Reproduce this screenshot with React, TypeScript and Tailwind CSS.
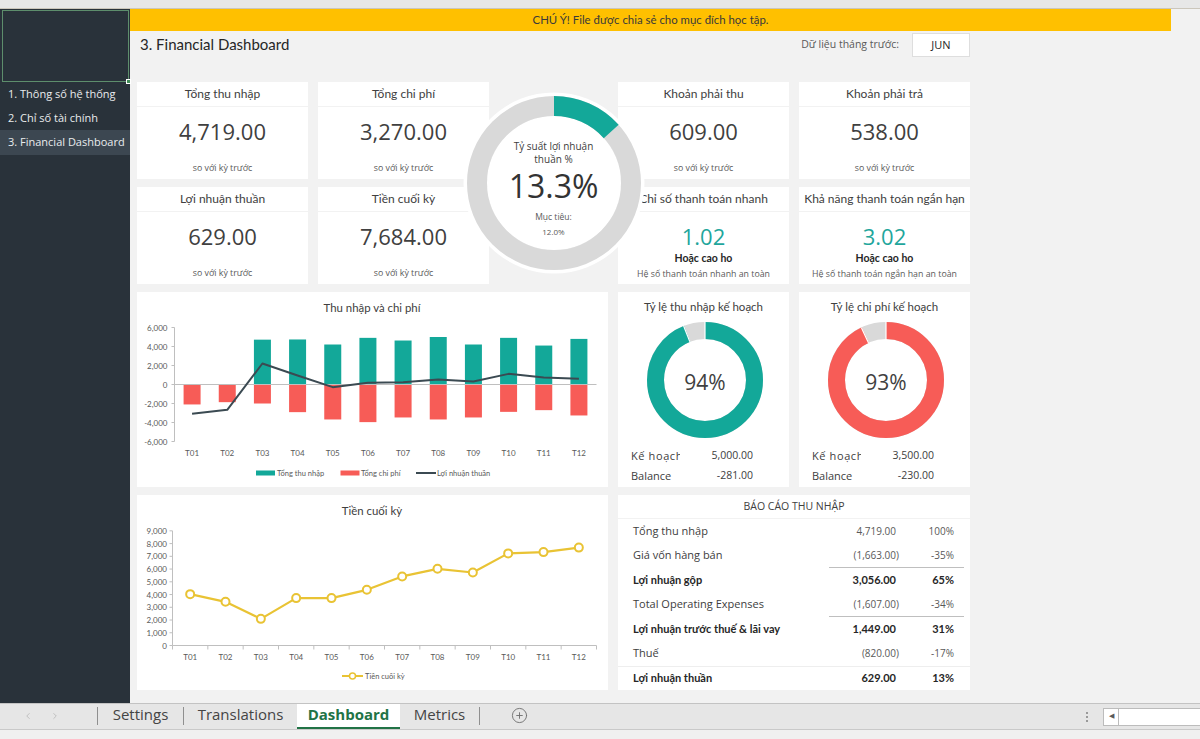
import React from "react";
import { ChevronLeft, ChevronRight, CirclePlus } from "lucide-react";

const TEAL = "#13a899";
const RED = "#f75c57";
const GOLD = "#e9c334";

function Sidebar() {
  return (
    <aside className="w-[130px] shrink-0 bg-[#29323a] flex flex-col text-[11px] text-[#e9ecee] font-['Open_Sans',sans-serif]">
      <div className="relative mt-[1px] ml-[2px] w-[127px] h-[72px] border border-[#5d8e6c]">
        <div className="absolute -right-[3px] -bottom-[3px] w-[5px] h-[5px] bg-[#3f8a55] border border-white" />
      </div>
      <div className="h-[24px] pl-[8px] flex items-center whitespace-nowrap">1. Thông số hệ thống</div>
      <div className="h-[24px] pl-[8px] flex items-center whitespace-nowrap">2. Chỉ số tài chính</div>
      <div className="h-[25px] pl-[8px] flex items-center whitespace-nowrap bg-[#3c4751]">3. Financial Dashboard</div>
    </aside>
  );
}

function Kpi({ title, value, className }: { title: string; value: string; className: string }) {
  return (
    <div className={"flex flex-col " + className}>
      <div className="h-[24px] shrink-0 bg-white flex items-center justify-center font-['Lato',sans-serif] text-[12px] text-[#404040]">
        {title}
      </div>
      <div className="mt-[1px] flex-1 bg-white flex flex-col items-center">
        <div className="mt-[9px] h-[30px] leading-[30px] text-[22px] text-[#404040]">{value}</div>
        <div className="mt-[16px] leading-[12px] text-[8.8px] text-[#595959]">so với kỳ trước</div>
      </div>
    </div>
  );
}

function Ratio({ title, value, note, className }: { title: string; value: string; note: string; className: string }) {
  return (
    <div className={"flex flex-col " + className}>
      <div className="h-[24px] shrink-0 bg-white flex items-center justify-center font-['Lato',sans-serif] text-[12px] text-[#404040] whitespace-nowrap overflow-hidden">
        {title}
      </div>
      <div className="mt-[1px] flex-1 bg-white flex flex-col items-center">
        <div className="mt-[9px] h-[30px] leading-[30px] text-[22px] text-[#1fa69c]">{value}</div>
        <div className="leading-[14px] text-[10.5px] font-bold font-['Lato',sans-serif] text-[#262626]">Hoặc cao ho</div>
        <div className="mt-[3px] leading-[12px] text-[8.8px] text-[#595959] whitespace-nowrap">{note}</div>
      </div>
    </div>
  );
}

function CenterDonut() {
  const r = 77;
  const c = 2 * Math.PI * r;
  return (
    <div className="col-start-3 row-start-1 row-span-2 relative z-10">
      <div className="absolute left-1/2 top-1/2 -translate-x-1/2 -translate-y-1/2 w-[190px] h-[190px]">
        <svg width="190" height="190" viewBox="0 0 190 190" className="absolute inset-0">
          <circle cx="95" cy="95" r="88.5" fill="none" stroke="#ffffff" strokeWidth="4" />
          <circle cx="95" cy="95" r="67" fill="#ffffff" />
          <circle cx="95" cy="95" r={r} fill="none" stroke="#d9d9d9" strokeWidth="20" />
          <circle
            cx="95"
            cy="95"
            r={r}
            fill="none"
            stroke={TEAL}
            strokeWidth="20"
            strokeDasharray={`${c * 0.133} ${c}`}
            transform="rotate(-90 95 95)"
          />
        </svg>
        <div className="absolute inset-0 flex flex-col items-center justify-center pt-[11px] text-[#404040]">
          <div className="leading-[13px] text-[10px]">Tỷ suất lợi nhuận</div>
          <div className="leading-[13px] text-[10px]">thuần %</div>
          <div className="mt-[3px] leading-[34px] text-[32px] text-[#333333]">13.3%</div>
          <div className="mt-[8px] leading-[12px] text-[8.5px] text-[#595959]">Mục tiêu:</div>
          <div className="mt-[3px] leading-[12px] text-[8px] text-[#595959]">12.0%</div>
        </div>
      </div>
    </div>
  );
}

function BarChart() {
  const inc = [0, 0, 4720, 4740, 4210, 4910, 4630, 5000, 4210, 4910, 4100, 4800];
  const exp = [-2100, -1860, -2000, -2910, -3680, -3960, -3470, -3680, -3470, -2880, -2700, -3260];
  const prof = [-3090, -2670, 2210, 950, -280, 175, 245, 525, 315, 1120, 740, 600];
  const X0 = 37.5;
  const X1 = 459.5;
  const Z = 92.5;
  const S = 19 / 2000;
  const cw = (X1 - X0) / 12;
  const cx = (i: number) => X0 + cw * i + cw / 2;
  const y = (v: number) => Z - v * S;
  const ticks: [number, string][] = [
    [6000, "6,000"],
    [4000, "4,000"],
    [2000, "2,000"],
    [0, "0"],
    [-2000, "-2,000"],
    [-4000, "-4,000"],
    [-6000, "-6,000"],
  ];
  const months = ["T01", "T02", "T03", "T04", "T05", "T06", "T07", "T08", "T09", "T10", "T11", "T12"];
  const path = prof.map((v, i) => `${i === 0 ? "M" : "L"}${cx(i)},${y(v)}`).join(" ");
  return (
    <svg width="471" height="195" className="block" fontFamily="Lato, sans-serif">
      <text x="235" y="15" textAnchor="middle" dominantBaseline="central" fontSize="11.4" fill="#404040">
        Thu nhập và chi phí
      </text>
      {ticks.map(([t, s]) => (
        <g key={t}>
          <text x="30.5" y={y(t)} textAnchor="end" dominantBaseline="central" fontSize="8" fill="#595959">
            {s}
          </text>
          <line x1={X0 - 3} x2={X0} y1={y(t)} y2={y(t)} stroke="#bfbfbf" />
        </g>
      ))}
      <line x1={X0} x2={X0} y1={y(6000)} y2={y(-6000)} stroke="#bfbfbf" />
      {inc.map((v, i) =>
        v > 0 ? <rect key={"i" + i} x={cx(i) - 8.5} y={y(v)} width="17" height={v * S} fill={TEAL} /> : null
      )}
      {exp.map((v, i) => (
        <rect key={"e" + i} x={cx(i) - 8.5} y={Z} width="17" height={-v * S} fill={RED} />
      ))}
      <line x1={X0} x2={X1} y1={Z} y2={Z} stroke="#bfbfbf" />
      <path d={path} fill="none" stroke="#3b4a52" strokeWidth="2" strokeLinejoin="round" />
      {months.map((m, i) => (
        <text key={m} x={cx(i)} y="161" textAnchor="middle" dominantBaseline="central" fontSize="8" fill="#595959">
          {m}
        </text>
      ))}
      <rect x="119" y="178.5" width="19" height="5" fill={TEAL} />
      <text x="140" y="181" dominantBaseline="central" fontSize="7.5" fill="#595959">
        Tổng thu nhập
      </text>
      <rect x="203.5" y="178.5" width="19" height="5" fill={RED} />
      <text x="224" y="181" dominantBaseline="central" fontSize="7.5" fill="#595959">
        Tổng chi phí
      </text>
      <line x1="279" x2="299" y1="181" y2="181" stroke="#3b4a52" strokeWidth="2" />
      <text x="300" y="181" dominantBaseline="central" fontSize="7.5" fill="#595959">
        Lợi nhuận thuần
      </text>
    </svg>
  );
}

function LineChart() {
  const vals = [4030, 3430, 2090, 3720, 3720, 4370, 5420, 6020, 5730, 7230, 7330, 7684];
  const X0 = 35.5;
  const X1 = 459.5;
  const Z = 150.5;
  const S = 12.74 / 1000;
  const cw = (X1 - X0) / 12;
  const cx = (i: number) => X0 + cw * i + cw / 2;
  const y = (v: number) => Z - v * S;
  const ticks: [number, string][] = [
    [9000, "9,000"],
    [8000, "8,000"],
    [7000, "7,000"],
    [6000, "6,000"],
    [5000, "5,000"],
    [4000, "4,000"],
    [3000, "3,000"],
    [2000, "2,000"],
    [1000, "1,000"],
    [0, "0"],
  ];
  const months = ["T01", "T02", "T03", "T04", "T05", "T06", "T07", "T08", "T09", "T10", "T11", "T12"];
  const path = vals.map((v, i) => `${i === 0 ? "M" : "L"}${cx(i)},${y(v)}`).join(" ");
  return (
    <svg width="471" height="195" className="block" fontFamily="Lato, sans-serif">
      <text x="235" y="15" textAnchor="middle" dominantBaseline="central" fontSize="11.4" fill="#404040">
        Tiền cuối kỳ
      </text>
      {ticks.map(([t, s]) => (
        <g key={t}>
          <text x="30" y={y(t)} textAnchor="end" dominantBaseline="central" fontSize="8" fill="#595959">
            {s}
          </text>
          <line x1={X0 - 3} x2={X0} y1={y(t)} y2={y(t)} stroke="#bfbfbf" />
        </g>
      ))}
      <line x1={X0} x2={X0} y1={y(9000)} y2={Z} stroke="#bfbfbf" />
      <line x1={X0} x2={X1} y1={Z} y2={Z} stroke="#bfbfbf" />
      {Array.from({ length: 13 }).map((_, i) => (
        <line key={i} x1={X0 + cw * i} x2={X0 + cw * i} y1={Z} y2={Z + 4} stroke="#bfbfbf" />
      ))}
      <path d={path} fill="none" stroke={GOLD} strokeWidth="2.2" strokeLinejoin="round" />
      {vals.map((v, i) => (
        <circle key={i} cx={cx(i)} cy={y(v)} r="4" fill="#ffffff" stroke={GOLD} strokeWidth="2" />
      ))}
      {months.map((m, i) => (
        <text key={m} x={cx(i)} y="162" textAnchor="middle" dominantBaseline="central" fontSize="8" fill="#595959">
          {m}
        </text>
      ))}
      <line x1="205" x2="226" y1="181" y2="181" stroke={GOLD} strokeWidth="2" />
      <circle cx="215.5" cy="181" r="3" fill="#ffffff" stroke={GOLD} strokeWidth="1.5" />
      <text x="228" y="181" dominantBaseline="central" fontSize="7.5" fill="#595959">
        Tiền cuối kỳ
      </text>
    </svg>
  );
}

function PlanDonut({
  title,
  pct,
  color,
  plan,
  balance,
  className,
}: {
  title: string;
  pct: number;
  color: string;
  plan: string;
  balance: string;
  className: string;
}) {
  const r = 49.5;
  const c = 2 * Math.PI * r;
  const a = pct * 2 * Math.PI;
  const ex = (rad: number) => 59 + rad * Math.sin(a);
  const ey = (rad: number) => 59 - rad * Math.cos(a);
  return (
    <div className={"bg-white flex flex-col " + className}>
      <div className="h-[29px] pt-[8px] text-center font-['Lato',sans-serif] text-[11.5px] leading-[14px] text-[#404040]">
        {title}
      </div>
      <div className="flex justify-center pl-[2px]">
        <svg width="118" height="118" viewBox="0 0 118 118">
          <circle cx="59" cy="59" r={r} fill="none" stroke="#d9d9d9" strokeWidth="17" />
          <circle
            cx="59"
            cy="59"
            r={r}
            fill="none"
            stroke={color}
            strokeWidth="17"
            strokeDasharray={`${c * pct} ${c}`}
            transform="rotate(-90 59 59)"
          />
          <line x1="59" y1={59 - 41} x2="59" y2={59 - 58} stroke="#ffffff" strokeWidth="1.2" />
          <line x1={ex(41)} y1={ey(41)} x2={ex(58)} y2={ey(58)} stroke="#ffffff" strokeWidth="1.2" />
          <text
            x="59"
            y="61"
            textAnchor="middle"
            dominantBaseline="central"
            fontSize="21"
            fill="#404040"
            fontFamily="'Open Sans', sans-serif"
          >
            {Math.round(pct * 100)}%
          </text>
        </svg>
      </div>
      <div className="mt-[7px] flex items-center h-[20px] pl-[13px] text-[#404040]">
        <div className="w-[53px] mr-[0px] overflow-hidden whitespace-nowrap text-[11px] tracking-[0.6px]">
          <div className="w-[49px] overflow-hidden">Kế hoạch</div>
        </div>
        <div className="w-[69px] text-right text-[10.5px]">{plan}</div>
      </div>
      <div className="flex items-center h-[20px] pl-[13px] text-[#404040]">
        <div className="w-[53px] overflow-hidden whitespace-nowrap text-[11px]">Balance</div>
        <div className="w-[69px] text-right text-[10.5px]">{balance}</div>
      </div>
    </div>
  );
}

type Row = { l: string; v: string; p: string; b?: boolean; line?: boolean; top?: boolean; tall: boolean };

function Report() {
  const rows: Row[] = [
    { l: "Tổng thu nhập", v: "4,719.00", p: "100%", tall: false },
    { l: "Giá vốn hàng bán", v: "(1,663.00)", p: "-35%", line: true, tall: true },
    { l: "Lợi nhuận gộp", v: "3,056.00", p: "65%", b: true, tall: false },
    { l: "Total Operating Expenses", v: "(1,607.00)", p: "-34%", line: true, tall: true },
    { l: "Lợi nhuận trước thuế & lãi vay", v: "1,449.00", p: "31%", b: true, tall: false },
    { l: "Thuế", v: "(820.00)", p: "-17%", tall: true },
    { l: "Lợi nhuận thuần", v: "629.00", p: "13%", b: true, top: true, tall: false },
  ];
  return (
    <div className="col-start-4 col-span-2 row-start-4 flex flex-col">
      <div className="h-[23px] shrink-0 bg-white flex items-center justify-center text-[10.5px] text-[#404040]">
        BÁO CÁO THU NHẬP
      </div>
      <div className="mt-[1px] flex-1 bg-white flex flex-col">
        {rows.map((r) => {
          const paren = r.v.startsWith("(");
          return (
            <div
              key={r.l}
              className={
                "flex items-stretch " +
                (r.tall ? "h-[25px] " : "h-[24px] ") +
                (r.top ? "border-t border-[#eeeeee] " : "") +
                (r.b
                  ? "font-['Lato',sans-serif] font-bold text-[#262626]"
                  : "font-['Open_Sans',sans-serif] text-[#404040]")
              }
            >
              <div className="flex-1 flex items-center pl-[15px] whitespace-nowrap text-[11px]">{r.l}</div>
              <div className={"w-[135px] mr-[6px] flex items-center " + (r.line ? "border-b border-[#bfbfbf]" : "")}>
                <div className={"w-[70px] text-right whitespace-nowrap " + (r.b ? "text-[11px]" : "text-[10px] text-[#595959]")}>
                  {r.v}
                  {paren ? null : <span className="invisible">)</span>}
                </div>
                <div className={"flex-1 text-right pr-[10px] " + (r.b ? "text-[11px]" : "text-[10px] text-[#595959]")}>
                  {r.p}
                </div>
              </div>
            </div>
          );
        })}
      </div>
    </div>
  );
}

function TabBar() {
  const sep = <div className="w-px h-[18px] self-center bg-[#8f8f8f] mb-[2px]" />;
  return (
    <div className="shrink-0 font-['Open_Sans',sans-serif]">
      <div className="h-[27px] bg-[#e6e6e6] border-t border-[#c3c3c3] border-b border-b-[#c9c9c9] flex items-stretch text-[15px] text-[#444444]">
        <div className="w-[97px] flex items-center pl-[23px] gap-[17px] pb-[2px] text-[#b8b8b8]">
          <ChevronLeft size={10} strokeWidth={2} />
          <ChevronRight size={10} strokeWidth={2} />
        </div>
        {sep}
        <div className="w-[85px] flex items-center justify-center pb-[4px]">Settings</div>
        {sep}
        <div className="w-[113px] flex items-center justify-center pb-[4px]">Translations</div>
        <div className="w-[103px] flex items-center justify-center pb-[2px] bg-white font-bold text-[#217346] border-b-2 border-[#217346]">
          Dashboard
        </div>
        <div className="w-[79px] flex items-center justify-center pb-[4px]">Metrics</div>
        {sep}
        <div className="ml-[31px] flex items-center pb-[2px] text-[#6f6f6f]">
          <CirclePlus size={17} strokeWidth={1.3} />
        </div>
        <div className="flex-1" />
        <div className="flex flex-col gap-[2px] self-center mr-[15px]">
          <div className="w-[2px] h-[2px] bg-[#9a9a9a]" />
          <div className="w-[2px] h-[2px] bg-[#9a9a9a]" />
          <div className="w-[2px] h-[2px] bg-[#9a9a9a]" />
        </div>
        <div className="w-[97px] h-[18px] self-center bg-white border border-[#bcbcbc] border-r-0 flex">
          <div className="w-[15px] border-r border-[#bcbcbc] flex items-center justify-center text-[7px] text-[#5a5a5a]">◀</div>
        </div>
      </div>
      <div className="h-[9px] bg-[#f0f0f0]" />
    </div>
  );
}

export default function App() {
  return (
    <div className="w-[1200px] h-[739px] flex flex-col bg-[#f2f2f2] overflow-hidden font-['Open_Sans',sans-serif] text-[#404040]">
      <div className="h-[9px] shrink-0 bg-[#e7e7e7] border-b border-[#cbc6bb]" />
      <div className="flex flex-1 min-h-0">
        <Sidebar />
        <main className="flex-1 min-w-0 flex flex-col">
          <div className="w-[1041px] h-[22px] shrink-0 bg-[#ffc000] flex items-center justify-center text-[11.4px] font-['Lato',sans-serif] text-[#3a3a3a]">
            CHÚ Ý! File được chia sẻ cho mục đích học tập.
          </div>
          <div className="ml-[7px] w-[833px] h-[51px] shrink-0 flex items-start justify-between">
            <div className="mt-[3px] pl-[3px] text-[15px] leading-[20px] font-['Lato',sans-serif] text-[#262626]">
              3. Financial Dashboard
            </div>
            <div className="mt-[2px] flex items-center">
              <span className="text-[10.5px] text-[#595959] mr-[13px]">Dữ liệu tháng trước:</span>
              <div className="w-[58px] h-[24px] bg-white border border-[#dedede] flex items-center justify-center text-[11px] text-[#262626]">
                JUN
              </div>
            </div>
          </div>
          <div className="ml-[7px] w-[833px] grid grid-cols-[171px_171px_109px_171px_171px] grid-rows-[97px_97px_195px_195px] gap-x-[10px] gap-y-[8px]">
            <Kpi title="Tổng thu nhập" value="4,719.00" className="col-start-1 row-start-1" />
            <Kpi title="Tổng chi phí" value="3,270.00" className="col-start-2 row-start-1" />
            <Kpi title="Khoản phải thu" value="609.00" className="col-start-4 row-start-1" />
            <Kpi title="Khoản phải trả" value="538.00" className="col-start-5 row-start-1" />
            <Kpi title="Lợi nhuận thuần" value="629.00" className="col-start-1 row-start-2" />
            <Kpi title="Tiền cuối kỳ" value="7,684.00" className="col-start-2 row-start-2" />
            <Ratio
              title="Chỉ số thanh toán nhanh"
              value="1.02"
              note="Hệ số thanh toán nhanh an toàn"
              className="col-start-4 row-start-2"
            />
            <Ratio
              title="Khả năng thanh toán ngắn hạn"
              value="3.02"
              note="Hệ số thanh toán ngắn hạn an toàn"
              className="col-start-5 row-start-2"
            />
            <CenterDonut />
            <div className="col-start-1 col-span-3 row-start-3 bg-white">
              <BarChart />
            </div>
            <PlanDonut
              title="Tỷ lệ thu nhập kế hoạch"
              pct={0.94}
              color={TEAL}
              plan="5,000.00"
              balance="-281.00"
              className="col-start-4 row-start-3"
            />
            <PlanDonut
              title="Tỷ lệ chi phí kế hoạch"
              pct={0.93}
              color={RED}
              plan="3,500.00"
              balance="-230.00"
              className="col-start-5 row-start-3"
            />
            <div className="col-start-1 col-span-3 row-start-4 bg-white">
              <LineChart />
            </div>
            <Report />
          </div>
        </main>
      </div>
      <TabBar />
    </div>
  );
}
